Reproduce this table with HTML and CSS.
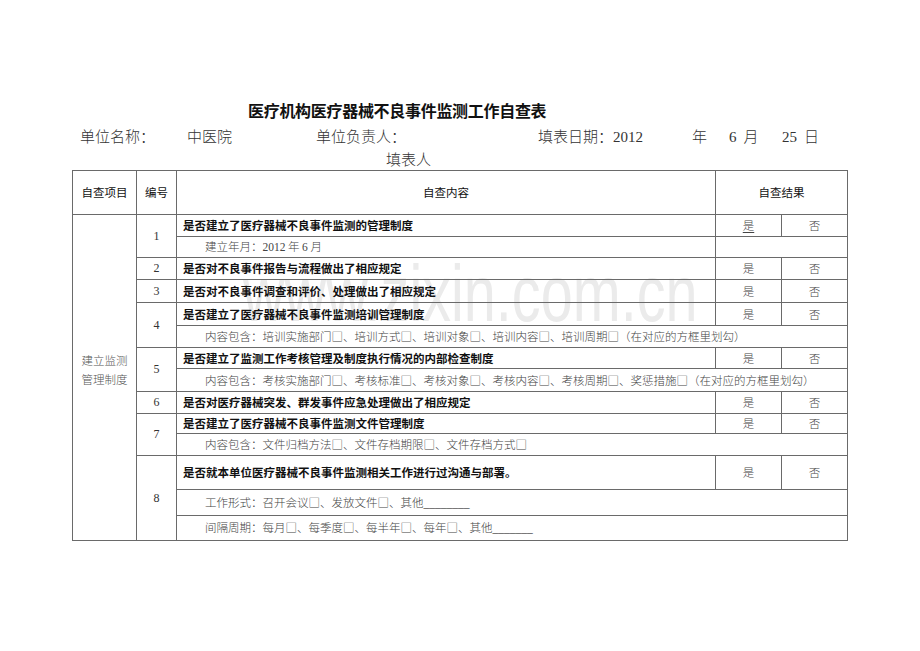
FILE: index.html
```html
<!DOCTYPE html>
<html lang="zh">
<head>
<meta charset="utf-8">
<title>医疗机构医疗器械不良事件监测工作自查表</title>
<link rel="stylesheet" href="styles.css">
</head>
<body>
<div class="doc">
  <div class="watermark">www.zixin.com.cn</div>
  <h1 class="title">医疗机构医疗器械不良事件监测工作自查表</h1>
  <div class="info">
    <span class="f-unit">单位名称：</span>
    <span class="f-name">中医院</span>
    <span class="f-lead">单位负责人：</span>
    <span class="f-date">填表日期：<span class="num">2012</span></span>
    <span class="f-year">年</span>
    <span class="f-month"><span class="num gap">6</span>月</span>
    <span class="f-day"><span class="num gap">25</span>日</span>
  </div>
  <div class="filler">填表人</div>
  <table class="sheet">
    <colgroup>
      <col class="c1"><col class="c2"><col class="c3"><col class="c4"><col class="c5">
    </colgroup>
    <tr class="r-head">
      <th>自查项目</th><th>编号</th><th>自查内容</th><th colspan="2">自查结果</th>
    </tr>
    <tr>
      <td rowspan="15" class="cat">建立监测<br>管理制度</td>
      <td rowspan="2" class="no">1</td>
      <td class="q">是否建立了医疗器械不良事件监测的管理制度</td>
      <td class="yn"><u>是</u></td><td class="yn">否</td>
    </tr>
    <tr class="h21">
      <td class="sub">建立年月：<span class="num">2012</span> 年 <span class="num">6</span> 月</td>
      <td colspan="2"></td>
    </tr>
    <tr>
      <td class="no">2</td>
      <td class="q">是否对不良事件报告与流程做出了相应规定</td>
      <td class="yn">是</td><td class="yn">否</td>
    </tr>
    <tr class="h23">
      <td class="no">3</td>
      <td class="q">是否对不良事件调查和评价、处理做出了相应规定</td>
      <td class="yn">是</td><td class="yn">否</td>
    </tr>
    <tr class="h23">
      <td rowspan="2" class="no">4</td>
      <td class="q">是否建立了医疗器械不良事件监测培训管理制度</td>
      <td class="yn">是</td><td class="yn">否</td>
    </tr>
    <tr>
      <td colspan="3" class="sub">内容包含：培训实施部门□、培训方式□、培训对象□、培训内容□、培训周期□（在对应的方框里划勾）</td>
    </tr>
    <tr class="h21">
      <td rowspan="2" class="no">5</td>
      <td class="q">是否建立了监测工作考核管理及制度执行情况的内部检查制度</td>
      <td class="yn">是</td><td class="yn">否</td>
    </tr>
    <tr class="h23">
      <td colspan="3" class="sub">内容包含：考核实施部门□、考核标准□、考核对象□、考核内容□、考核周期□、奖惩措施□（在对应的方框里划勾）</td>
    </tr>
    <tr>
      <td class="no">6</td>
      <td class="q">是否对医疗器械突发、群发事件应急处理做出了相应规定</td>
      <td class="yn">是</td><td class="yn">否</td>
    </tr>
    <tr class="h20">
      <td rowspan="2" class="no">7</td>
      <td class="q">是否建立了医疗器械不良事件监测文件管理制度</td>
      <td class="yn">是</td><td class="yn">否</td>
    </tr>
    <tr>
      <td colspan="3" class="sub">内容包含：文件归档方法□、文件存档期限□、文件存档方式□</td>
    </tr>
    <tr class="h34">
      <td rowspan="3" class="no">8</td>
      <td class="q">是否就本单位医疗器械不良事件监测相关工作进行过沟通与部署。</td>
      <td class="yn">是</td><td class="yn">否</td>
    </tr>
    <tr class="h26">
      <td colspan="3" class="sub">工作形式：召开会议□、发放文件□、其他<span class="num">________</span></td>
    </tr>
    <tr class="h25">
      <td colspan="3" class="sub">间隔周期：每月□、每季度□、每半年□、每年□、其他<span class="num">_______</span></td>
    </tr>
  </table>
</div>
</body>
</html>
```

FILE: styles.css
```css
html, body {
  margin: 0;
  padding: 0;
  background: #fff;
}

body {
  font-family: "Noto Sans CJK SC", "Liberation Sans", sans-serif;
  color: #222;
}

.doc {
  position: relative;
  width: 776px;
  padding: 100px 0 40px 72px;
}

.watermark {
  position: absolute;
  left: 243px;
  top: 254px;
  font-family: "Liberation Sans", Arial, sans-serif;
  font-size: 80px;
  line-height: 80px;
  color: #ebebeb;
  white-space: nowrap;
  transform: scaleX(0.72);
  transform-origin: left top;
  pointer-events: none;
}

.title {
  margin: 0 0 0 176px;
  font-size: 16px;
  line-height: 20px;
  font-weight: bold;
  color: #111;
  letter-spacing: -0.3px;
  position: relative;
}

.info {
  display: flex;
  margin-top: 6px;
  height: 20px;
  line-height: 20px;
  font-size: 15px;
  font-weight: 300;
  color: #333;
  white-space: nowrap;
  position: relative;
}

.num {
  font-family: "Liberation Serif", "Times New Roman", serif;
}

.gap { margin-right: 7px; }

.f-unit { margin-left: 8px; width: 107px; }
.f-name { width: 129px; }
.f-lead { width: 222px; }
.f-date { width: 154px; }
.f-year { width: 37px; }
.f-month { width: 53px; }

.filler {
  margin: 3px 0 0 314px;
  font-size: 15px;
  font-weight: 300;
  line-height: 20px;
  color: #333;
  position: relative;
}

.sheet {
  position: relative;
  margin-top: 1px;
  width: 776px;
  table-layout: fixed;
  border-collapse: collapse;
  font-size: 11.5px;
}

.c1 { width: 64px; }
.c2 { width: 40px; }
.c3 { width: 539px; }
.c4 { width: 66px; }
.c5 { width: 66px; }

.sheet th,
.sheet td {
  border: 1px solid #6a6a6a;
  padding: 0;
  height: 21px;
  line-height: 13px;
  white-space: nowrap;
  vertical-align: middle;
}

.sheet th {
  font-weight: normal;
  color: #111;
  font-size: 11.5px;
}

.sheet .r-head th { height: 43px; }
.sheet .h20 td { height: 19px; }
.sheet .h21 td { height: 20px; }
.sheet .h23 td { height: 22px; }
.sheet .h25 td { height: 24px; }
.sheet .h26 td { height: 25px; }
.sheet .h34 td { height: 33px; }

.sheet .cat {
  text-align: center;
  color: #555;
  font-weight: 300;
  line-height: 19px;
  padding-bottom: 16px;
}

.sheet .no {
  text-align: center;
  font-family: "Liberation Serif", "Times New Roman", serif;
  font-size: 12px;
  color: #333;
}

.sheet .q {
  padding-left: 6px;
  font-weight: bold;
  color: #111;
  text-align: left;
}

.sheet .sub {
  padding-left: 28px;
  font-weight: 300;
  color: #444;
  text-align: left;
}

.sheet .yn {
  text-align: center;
  font-weight: 300;
  color: #444;
}

.yn u {
  text-decoration: underline;
  text-underline-offset: 2px;
}
```
